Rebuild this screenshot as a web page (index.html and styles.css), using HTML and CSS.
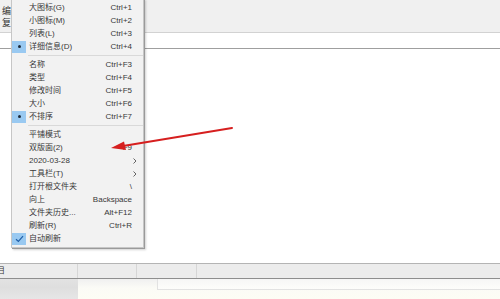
FILE: index.html
```html
<!DOCTYPE html>
<html lang="zh-CN">
<head>
  <meta charset="UTF-8">
  <title>查看菜单</title>
  <link rel="stylesheet" href="styles.css">
</head>
<body>

  <div class="window">
    <div class="toolbar">
      <span class="tool-label">编</span>
      <span class="tool-label">复</span>
    </div>
    <div class="header-row"></div>
    <div class="file-area"></div>
    <div class="statusbar">
      <div class="cell first">目</div>
      <div class="cell"></div>
      <div class="cell"></div>
      <div class="cell"></div>
    </div>
    <div class="lower">
      <div class="lower-left"></div>
      <div class="lower-right"><div class="preview-box"></div></div>
    </div>
  </div>

  <ul class="menu">
    <li class="item"><span class="mark"></span><span class="label">大图标(G)</span><span class="key">Ctrl+1</span></li>
    <li class="item"><span class="mark"></span><span class="label">小图标(M)</span><span class="key">Ctrl+2</span></li>
    <li class="item"><span class="mark"></span><span class="label">列表(L)</span><span class="key">Ctrl+3</span></li>
    <li class="item"><span class="mark on"><i class="dot"></i></span><span class="label">详细信息(D)</span><span class="key">Ctrl+4</span></li>
    <li class="sep"></li>
    <li class="item"><span class="mark"></span><span class="label">名称</span><span class="key">Ctrl+F3</span></li>
    <li class="item"><span class="mark"></span><span class="label">类型</span><span class="key">Ctrl+F4</span></li>
    <li class="item"><span class="mark"></span><span class="label">修改时间</span><span class="key">Ctrl+F5</span></li>
    <li class="item"><span class="mark"></span><span class="label">大小</span><span class="key">Ctrl+F6</span></li>
    <li class="item"><span class="mark on"><i class="dot"></i></span><span class="label">不排序</span><span class="key">Ctrl+F7</span></li>
    <li class="sep"></li>
    <li class="item"><span class="mark"></span><span class="label">平铺模式</span><span class="key"></span></li>
    <li class="item"><span class="mark"></span><span class="label">双版面(2)</span><span class="key">F9</span></li>
    <li class="item"><span class="mark"></span><span class="label">2020-03-28</span><span class="key sub"><svg width="4" height="6" viewBox="0 0 4 6"><path d="M0.5 0.5 L3 3 L0.5 5.5" fill="none" stroke="#555" stroke-width="0.9"/></svg></span></li>
    <li class="item"><span class="mark"></span><span class="label">工具栏(T)</span><span class="key sub"><svg width="4" height="6" viewBox="0 0 4 6"><path d="M0.5 0.5 L3 3 L0.5 5.5" fill="none" stroke="#555" stroke-width="0.9"/></svg></span></li>
    <li class="item"><span class="mark"></span><span class="label">打开根文件夹</span><span class="key">\</span></li>
    <li class="item"><span class="mark"></span><span class="label">向上</span><span class="key">Backspace</span></li>
    <li class="item"><span class="mark"></span><span class="label">文件夹历史...</span><span class="key">Alt+F12</span></li>
    <li class="item"><span class="mark"></span><span class="label">刷新(R)</span><span class="key">Ctrl+R</span></li>
    <li class="item"><span class="mark on"><svg width="9" height="8" viewBox="0 0 9 8"><path d="M1 4.2 L3.4 6.5 L8 1.2" fill="none" stroke="#1f5fa8" stroke-width="1.2"/></svg></span><span class="label">自动刷新</span><span class="key"></span></li>
  </ul>

  <svg class="arrow" width="500" height="299" viewBox="0 0 500 299">
    <line x1="232" y1="128" x2="123" y2="146" stroke="#d61f1f" stroke-width="2" stroke-linecap="round"/>
    <polygon points="111,148 124,141.6 126,150" fill="#d61f1f"/>
  </svg>

</body>
</html>
```

FILE: styles.css
```css
* { margin: 0; padding: 0; box-sizing: border-box; }
body {
  width: 500px;
  height: 299px;
  overflow: hidden;
  position: relative;
  font-family: "Liberation Sans", "Noto Sans CJK SC", sans-serif;
  font-size: 8px;
  color: #383838;
  background: #fff;
}
.window {
  display: flex;
  flex-direction: column;
  height: 299px;
}
.toolbar {
  height: 33px;
  background: #f0f0f0;
  border-bottom: 1px solid #d2d2d2;
  display: flex;
  flex-direction: column;
  padding: 5px 0 0 2px;
  font-size: 9px;
  line-height: 12px;
}
.tool-label { color: #333; }
.header-row {
  height: 16px;
  background: #fff;
  border-bottom: 1px solid #9f9f9f;
}
.file-area {
  height: 214px;
  background: #fff;
}
.statusbar {
  height: 16px;
  background: #ececec;
  border-top: 1px solid #b4b4b4;
  border-bottom: 1px solid #8e8e8e;
  display: grid;
  grid-template-columns: 78px 59px 60px 1fr;
}
.cell {
  border-right: 1px solid #d6d6d6;
  line-height: 14px;
  font-size: 8px;
}
.cell.first { margin-left: -3px; }
.cell:last-child { border-right: none; }
.lower {
  flex: 1;
  display: flex;
}
.lower-left {
  width: 78px;
  background: linear-gradient(#e2e2e2, #dedede 40%, #e6e6e6);
}
.lower-right {
  flex: 1;
  background: linear-gradient(#f0f0f0, #fbfbf6 45%, #fdfdf4);
  padding-left: 79px;
}
.preview-box {
  height: 11px;
  background: linear-gradient(#f6f6f6, #fdfdfb);
  border-left: 1px solid #e2e2e2;
  border-bottom: 1px solid #e2e2e2;
}

.menu {
  position: absolute;
  left: 11px;
  top: -2px;
  width: 133px;
  list-style: none;
  background: #f2f2f2;
  border: 1px solid #c6c6c6;
  box-shadow: 1px 1px 0 #9a9a9a, 2px 2px 2px rgba(0, 0, 0, 0.18);
  padding: 2px 0;
}
.item {
  display: grid;
  grid-template-columns: 17px 1fr auto;
  align-items: center;
  height: 13px;
  line-height: 13px;
  padding-right: 11px;
  white-space: nowrap;
}
.mark {
  width: 14px;
  height: 12px;
  display: flex;
  align-items: center;
  justify-content: center;
}
.mark.on { background: #99c9f1; }
.dot {
  width: 3px;
  height: 3px;
  border-radius: 50%;
  background: #1c2a3a;
}
.key { text-align: right; }
.key.sub {
  display: flex;
  justify-content: flex-end;
  margin-right: -5px;
}
.sep {
  height: 5px;
  margin-left: 16px;
  border-bottom: 1px solid #d9d9d9;
  position: relative;
  top: -2px;
}
.arrow {
  position: absolute;
  left: 0;
  top: 0;
  pointer-events: none;
}
```
